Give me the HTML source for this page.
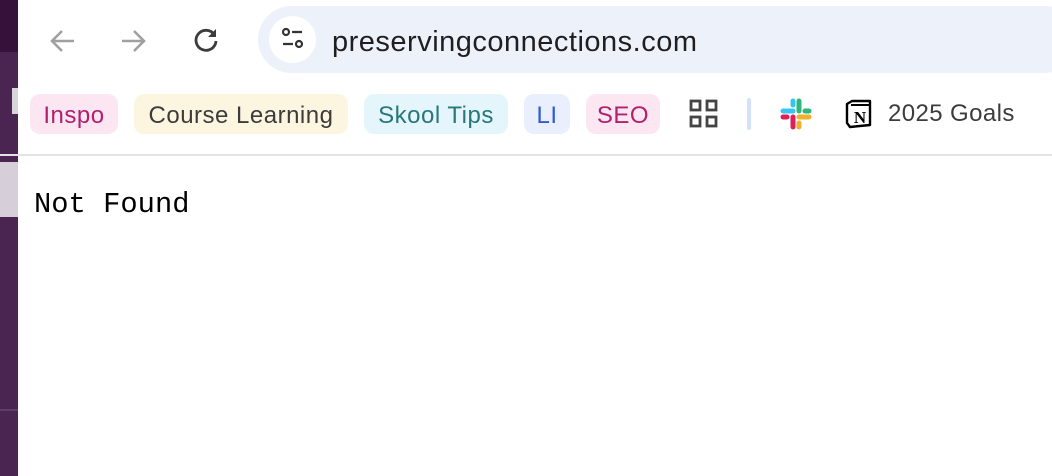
<!DOCTYPE html>
<html><head><meta charset="utf-8"><style>
*{margin:0;padding:0;box-sizing:border-box}
body{width:1052px;height:476px;overflow:hidden;background:#fff;position:relative;font-family:"Liberation Sans",Arial,sans-serif}
.strip{position:absolute;left:0;top:0;width:18px;height:476px;background:#4a2552}
.strip .t{position:absolute;left:0;top:0;width:18px;height:52px;background:#36123a}
.strip .l{position:absolute;left:0;top:162px;width:18px;height:55px;background:#d6cfda}
.strip .m{position:absolute;left:12px;top:88px;width:6px;height:26px;background:#d8d4da}
.strip .n{position:absolute;left:0;top:409px;width:18px;height:2px;background:#5e3d66}
.url{position:absolute;left:258px;top:6px;width:820px;height:67px;background:#edf1fa;border-radius:34px}
.site{position:absolute;left:269px;top:16px;width:47px;height:47px;border-radius:50%;background:#fff}
.urltext{position:absolute;left:332px;top:26px;font-size:29px;color:#1f1f1f;letter-spacing:0.5px}
.chip{position:absolute;top:94px;height:40px;border-radius:10px;font-size:24px;line-height:44px;text-align:center;letter-spacing:0.5px}
.sep{position:absolute;left:0;top:154px;width:1052px;height:2px;background:#e3e3e3}
.nf{position:absolute;left:34px;top:188px;font-family:"Liberation Mono","DejaVu Sans Mono",monospace;font-size:28.8px;color:#000}
</style></head><body>
<div class="strip"><div class="t"></div><div class="l"></div><div class="m"></div><div class="n"></div></div>
<svg style="position:absolute;left:48px;top:28px" width="28" height="26" viewBox="0 0 28 26"><path d="M26 13H4M14 3L4 13l10 10" fill="none" stroke="#a0a0a0" stroke-width="2.6"/></svg>
<svg style="position:absolute;left:120px;top:28px" width="28" height="26" viewBox="0 0 28 26"><path d="M2 13h22M14 3l10 10-10 10" fill="none" stroke="#a0a0a0" stroke-width="2.6"/></svg>
<svg style="position:absolute;left:192px;top:26px" width="28" height="28" viewBox="0 0 28 28"><path d="M22.5 9A10 10 0 1 0 24 15" fill="none" stroke="#3c3c3c" stroke-width="2.8"/><path d="M24 3v8h-8z" fill="#3c3c3c"/></svg>
<div class="url"></div>
<div class="site"><svg width="47" height="47" viewBox="0 0 47 47"><circle cx="17" cy="16" r="3" fill="none" stroke="#333" stroke-width="2.2"/><path d="M23 16h10M14 28h10" stroke="#333" stroke-width="2.2"/><circle cx="30" cy="28" r="3" fill="none" stroke="#333" stroke-width="2.2"/></svg></div>
<div class="urltext">preservingconnections.com</div>
<div class="chip" style="left:30px;width:88px;background:#fbe6f2;color:#b0216e">Inspo</div>
<div class="chip" style="left:134px;width:214px;background:#fcf6e1;color:#3c3c3c">Course Learning</div>
<div class="chip" style="left:364px;width:144px;background:#e4f5fb;color:#27777b">Skool Tips</div>
<div class="chip" style="left:524px;width:46px;background:#e9effd;color:#2e5bd6">LI</div>
<div class="chip" style="left:586px;width:74px;background:#fbe6f2;color:#b0216e">SEO</div>
<svg style="position:absolute;left:689px;top:99px" width="30" height="30" viewBox="0 0 30 30"><g fill="none" stroke="#444" stroke-width="2.8"><rect x="2" y="2" width="9" height="9"/><rect x="18" y="2" width="9" height="9"/><rect x="2" y="18" width="9" height="9"/><rect x="18" y="18" width="9" height="9"/></g></svg>
<div style="position:absolute;left:747px;top:98px;width:4px;height:32px;border-radius:2px;background:#d3e2fb"></div>
<svg style="position:absolute;left:780px;top:98px" width="32" height="32" viewBox="0 0 32 32"><g stroke-linecap="round" stroke-width="5"><path d="M3 13h10" stroke="#36c5f0"/><path d="M13 3v4" stroke="#36c5f0"/><path d="M19 3v10" stroke="#2eb67d"/><path d="M29 13h-4" stroke="#2eb67d"/><path d="M29 19H19" stroke="#ecb22e"/><path d="M19 29v-4" stroke="#ecb22e"/><path d="M13 29V19" stroke="#e01e5a"/><path d="M3 19h4" stroke="#e01e5a"/></g></svg>
<svg style="position:absolute;left:845px;top:99px" width="28" height="30" viewBox="0 0 28 30"><path d="M2 5l5-3h18v24l-20 2-3-4z" fill="#fff" stroke="#000" stroke-width="2.4" stroke-linejoin="round"/><path d="M6 6h18" stroke="#000" stroke-width="2"/><text x="15" y="24" font-family="Liberation Serif,serif" font-weight="bold" font-size="17" text-anchor="middle">N</text></svg>
<div style="position:absolute;left:888px;top:100px;font-size:24px;letter-spacing:0.4px;color:#3c3c3c">2025 Goals</div>
<div class="sep"></div>
<div class="nf">Not Found</div>
</body></html>
